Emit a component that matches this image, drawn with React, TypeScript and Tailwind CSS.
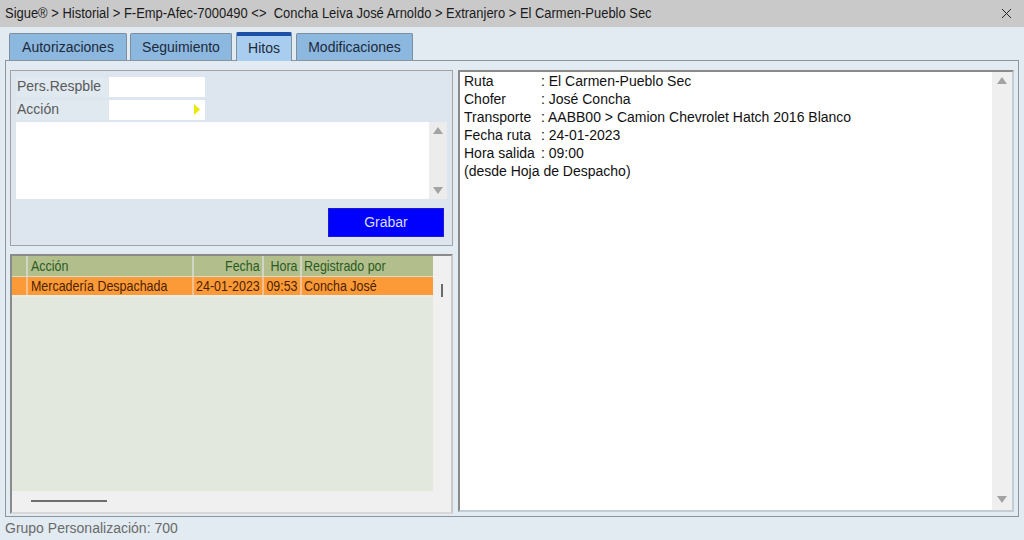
import { X } from "lucide-react";

const tabs = [
  { t: "Autorizaciones", w: "w-[118px]" },
  { t: "Seguimiento", w: "w-[102px]" },
  { t: "Hitos", w: "w-[56px]" },
  { t: "Modificaciones", w: "w-[117px]" },
];

const info = [
  ["Ruta", "El Carmen-Pueblo Sec"],
  ["Chofer", "José Concha"],
  ["Transporte", "AABB00 > Camion Chevrolet Hatch 2016 Blanco"],
  ["Fecha ruta", "24-01-2023"],
  ["Hora salida", "09:00"],
];

function UpArrow() {
  return (
    <svg width="10" height="7" viewBox="0 0 10 7">
      <path d="M5 0 L10 7 L0 7 Z" fill="#a3a3a3" />
    </svg>
  );
}

function DownArrow() {
  return (
    <svg width="10" height="7" viewBox="0 0 10 7">
      <path d="M0 0 L10 0 L5 7 Z" fill="#a3a3a3" />
    </svg>
  );
}

// texto angosto (la grilla usa una fuente condensada)
function Narrow({ children, right }: { children: React.ReactNode; right?: boolean }) {
  return (
    <span
      className={
        "inline-block whitespace-nowrap scale-x-[0.83] " + (right ? "origin-right" : "origin-left")
      }
    >
      {children}
    </span>
  );
}

export default function App() {
  return (
    <div className="w-[1024px] h-[540px] bg-[#e2eaf2] flex flex-col font-['Liberation_Sans',Arial,sans-serif] text-[#222] overflow-hidden">
      {/* Barra de título */}
      <div className="h-[27px] bg-[#c9c9c9] flex items-center justify-between pl-[5px] pr-[9px]">
        <span className="inline-block whitespace-nowrap text-[14px] text-[#1a1a1a] scale-x-[0.925] origin-left">
          Sigue® &gt; Historial &gt; F-Emp-Afec-7000490 &lt;&gt;&nbsp; Concha Leiva José Arnoldo &gt; Extranjero &gt; El Carmen-Pueblo Sec
        </span>
        <X size={17} strokeWidth={1.4} className="text-[#222]" />
      </div>

      {/* Pestañas */}
      <div className="h-[33px] flex items-end pl-[9px] relative z-10">
        {tabs.map(({ t, w }, i) =>
          t === "Hitos" ? (
            <div
              key={t}
              className={`${w} ml-[4px] h-[29px] -mb-[1px] border border-[#7f8e9c] border-b-0 border-t-[4px] border-t-[#1e4fa6] bg-[#a9cdee] flex items-center justify-center text-[14px] text-[#1c2a3a] rounded-t-[2px]`}
            >
              {t}
            </div>
          ) : (
            <div
              key={t}
              className={`${w} ${i === 0 ? "" : i === 1 ? "ml-[3px]" : "ml-[4px]"} h-[27px] border border-[#7f8e9c] border-b-0 bg-[#8cb7df] flex items-center justify-center pt-[1px] text-[14px] text-[#1c2a3a] rounded-t-[2px]`}
            >
              {t}
            </div>
          )
        )}
      </div>

      {/* Panel principal */}
      <div className="mx-[5px] h-[457px] border border-[#8a97a3] bg-[#e2eaf2] flex gap-[5px] pt-[9px] pl-[4px] pr-[4px] pb-[2px]">
        {/* Columna izquierda */}
        <div className="w-[443px] flex flex-col gap-[8px]">
          <div className="h-[176px] border border-[#a3a3a3] bg-[#dde6ef] px-[5px] pt-[5px] flex flex-col">
            <div className="flex items-center h-[21px] gap-[1px]">
              <div className="w-[92px] h-[20px] bg-[#e0e8f0] text-[14px] text-[#5a5a5a] pl-[1px] flex items-center">Pers.Respble</div>
              <div className="w-[96px] h-[20px] bg-white" />
            </div>
            <div className="flex items-center h-[21px] gap-[1px] mt-[2px]">
              <div className="w-[92px] h-[20px] bg-[#e0e8f0] text-[14px] text-[#5a5a5a] pl-[1px] flex items-center">Acción</div>
              <div className="w-[96px] h-[20px] bg-white flex items-center justify-end pr-[5px]">
                <svg width="6" height="11" viewBox="0 0 6 11">
                  <path d="M0 0 L6 5.5 L0 11 Z" fill="#e8e800" />
                </svg>
              </div>
            </div>
            <div className="mt-[2px] w-[431px] h-[77px] bg-white flex justify-end">
              <div className="w-[18px] bg-[#ececec] flex flex-col items-center justify-between py-[5px]">
                <UpArrow />
                <DownArrow />
              </div>
            </div>
            <div className="flex justify-end mt-[9px] pr-[3px]">
              <button className="w-[116px] h-[29px] bg-[#0000ff] border border-[#1a1ad0] text-[#d8dcff] text-[14px] flex items-center justify-center">
                Grabar
              </button>
            </div>
          </div>

          {/* Grilla */}
          <div className="flex-1 border-[2px] border-[#8a8a8a] border-r-[#c9c9c9] border-b-[#d8d8d8] bg-[#f0f0f0] flex flex-col text-[15px]">
            <div className="flex h-[235px]">
              <div className="w-[421px] bg-[#e2e8dd] flex flex-col">
                <div className="h-[21px] bg-[#b2bf8c] flex text-[#2a5a22] border-b border-[#d6dccf]">
                  <div className="w-[16px] border-r-[2px] border-[#d0d6c4]" />
                  <div className="w-[166px] pl-[3px] border-r-[2px] border-[#d0d6c4] flex items-center"><Narrow>Acción</Narrow></div>
                  <div className="w-[70px] pr-[2px] border-r-[2px] border-[#d0d6c4] flex items-center justify-end"><Narrow right>Fecha</Narrow></div>
                  <div className="w-[38px] pr-[2px] border-r-[2px] border-[#d0d6c4] flex items-center justify-end"><Narrow right>Hora</Narrow></div>
                  <div className="flex-1 pl-[2px] flex items-center"><Narrow>Registrado por</Narrow></div>
                </div>
                <div className="h-[20px] bg-[#fd9a38] flex text-[#4a2200] border-b-[2px] border-[#e8ece2]">
                  <div className="w-[16px] border-r-[2px] border-[#f5c090]" />
                  <div className="w-[166px] pl-[3px] border-r-[2px] border-[#f5c090] flex items-center"><Narrow>Mercadería Despachada</Narrow></div>
                  <div className="w-[70px] pr-[2px] border-r-[2px] border-[#f5c090] flex items-center justify-end"><Narrow right>24-01-2023</Narrow></div>
                  <div className="w-[38px] pr-[2px] border-r-[2px] border-[#f5c090] flex items-center justify-end"><Narrow right>09:53</Narrow></div>
                  <div className="flex-1 pl-[2px] flex items-center"><Narrow>Concha José</Narrow></div>
                </div>
              </div>
              <div className="flex-1 flex justify-center pt-[28px]">
                <div className="w-[2px] h-[13px] bg-[#6a6a6a]" />
              </div>
            </div>
            <div className="flex-1 pl-[19px] pt-[9px]">
              <div className="w-[76px] h-[2px] bg-[#6e6e6e]" />
            </div>
          </div>
        </div>

        {/* Panel derecho */}
        <div className="flex-1 mb-[2px] border-[2px] border-[#8a8a8a] border-r-[#c4ccd4] border-b-[#c4ccd4] bg-white flex">
          <div className="flex-1 pl-[4px] text-[14px] leading-[18px] text-[#111]">
            {info.map(([k, v]) => (
              <div key={k} className="flex">
                <span className="w-[77px]">{k}</span>
                <span>: {v}</span>
              </div>
            ))}
            <div>(desde Hoja de Despacho)</div>
          </div>
          <div className="w-[20px] bg-[#efefef] flex flex-col items-center justify-between pt-[5px] pb-[7px]">
            <UpArrow />
            <DownArrow />
          </div>
        </div>
      </div>

      {/* Pie */}
      <div className="pl-[5px] pt-[1px] text-[14px] text-[#6a6a6a]">Grupo Personalización: 700</div>
    </div>
  );
}
